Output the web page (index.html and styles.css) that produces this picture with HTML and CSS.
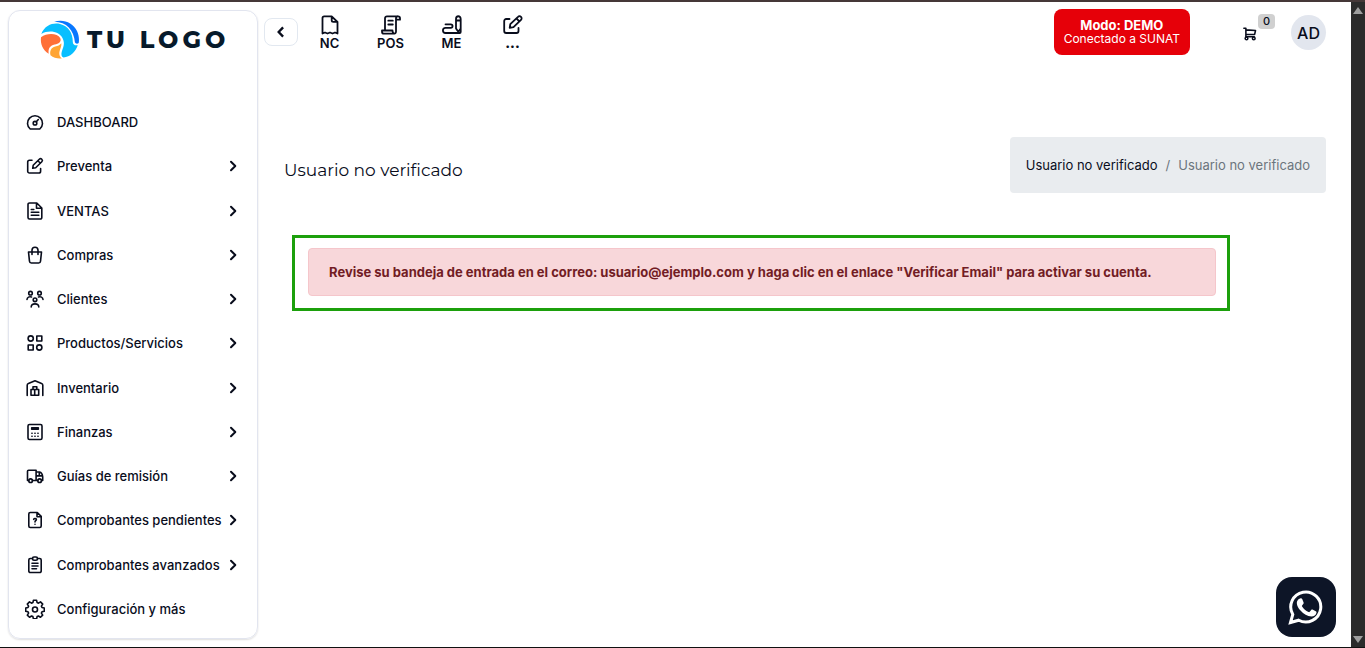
FILE: index.html
```html
<!DOCTYPE html>
<html lang="es">
<head>
<meta charset="utf-8">
<title>Usuario no verificado</title>
<link rel="stylesheet" href="styles.css">
</head>
<body>
<svg class="sprite" aria-hidden="true">
  <symbol id="chevron" viewBox="0 0 12 12"><path d="M4 1.700 8.300 6 4 10.300"/></symbol>
  <symbol id="edit" viewBox="0 0 20 20"><path d="M7 4.200H4.500A1.800 1.800 0 0 0 2.700 6v9.200A1.800 1.800 0 0 0 4.500 17h9.300a1.800 1.800 0 0 0 1.800-1.800v-2.700M7.700 12.300l.5-3L14.300 3.200a1.700 1.700 0 0 1 2.500 2.500l-6.100 6.100-3 .5ZM12.900 4.700l2.500 2.500"/></symbol>
  <symbol id="edit-large" viewBox="0 0 20 20"><path d="M6.500 4H3.200A2 2 0 0 0 1.200 6v10a2 2 0 0 0 2 2h10.300a2 2 0 0 0 2-2v-3M6.700 12.800l.6-3.700L15 1.800a2.100 2.100 0 0 1 3 3l-7.500 7.400-3.800.6ZM13.500 3.500l2.800 2.800"/></symbol>
</svg>
<div class="app">
  <aside class="sidebar">
    <a class="logo" href="#">
      <svg class="logo-mark" viewBox="0 0 40 40" aria-hidden="true">
        <path fill="#0877ff" d="M14 1.800C23-1.500 33 2.500 37 11c2 4.500 2.300 8.500 1.700 12-1.300 1.200-3.200.8-3.800-.7C34 10 26 1.500 14 1.800Z"/>
        <path fill="#08bfff" d="M1.300 14C5 5 13 2.500 20 4c8 1.700 13 9 12.800 18 0 2.800 2.500 3.800 5 3.200-2.500 7-7.500 11.500-14.300 12.300-2-.8-2.500-3-1.800-5.500 1.500-5 3.500-8 1-13.500C19.500 11.500 9 9.500 1.300 14Z"/>
        <path fill="#ff7038" d="M1 17.200c6-4.700 16.500-4.200 19.200.8 1.800 4-1.700 5.700-5.500 6.500-5.200 1.200-6.700 4.300-6 9.300C2.500 30 .2 23.500 1 17.200Z"/>
        <path fill="#ffa534" d="M10.500 35.300c-1-4.300.5-7.800 4.800-8.800 2.700-.6 4.400-1.400 6-3.300.5 4-2 6.500-2 10.300 0 2 1 3.800 2.500 5-4 .5-8.300-.5-11.300-3.200Z"/>
      </svg>
      <span class="logo-text">TU LOGO</span>
    </a>
    <nav class="menu">
      <a href="#"><svg class="icon" viewBox="0 0 20 20"><path d="M5.200 17a7.500 7.500 0 1 1 9.600 0Z"/><circle cx="10" cy="11.200" r="1.800"/><path d="m11.300 9.800 2-2.300"/></svg><span>DASHBOARD</span></a>
      <a href="#"><svg class="icon"><use href="#edit"/></svg><span>Preventa</span><svg class="arrow"><use href="#chevron"/></svg></a>
      <a href="#"><svg class="icon" viewBox="0 0 20 20"><path d="M4.500 2h7.300l5 5v9.500A1.500 1.500 0 0 1 15.300 18H4.500A1.500 1.500 0 0 1 3 16.500v-13A1.500 1.500 0 0 1 4.500 2ZM11.500 2v5.200h5.200M6.300 8.500h2.500M6.300 11.300h7.500M6.300 14.300h7.500"/></svg><span>VENTAS</span><svg class="arrow"><use href="#chevron"/></svg></a>
      <a href="#"><svg class="icon" viewBox="0 0 20 20"><path d="M3.500 7h13l-1 9.300A1.800 1.800 0 0 1 13.700 18H6.300a1.800 1.800 0 0 1-1.800-1.700ZM7 9.500V5.300a3 3 0 0 1 6 0v4.200"/></svg><span>Compras</span><svg class="arrow"><use href="#chevron"/></svg></a>
      <a href="#"><svg class="icon" viewBox="0 0 20 20"><circle cx="5.500" cy="4.200" r="1.800"/><circle cx="14.500" cy="4.200" r="1.800"/><circle cx="10" cy="10.800" r="1.800"/><path d="M2 10.500c.2-2.500 2.200-3 4.500-2.500M18 10.500c-.2-2.500-2.200-3-4.500-2.500M6.200 18c.2-4.200 7.400-4.200 7.600 0"/></svg><span>Clientes</span><svg class="arrow"><use href="#chevron"/></svg></a>
      <a href="#"><svg class="icon" viewBox="0 0 20 20"><circle cx="5.700" cy="5.500" r="2.600"/><path d="M11.800 3h5v5h-5ZM3.200 12h5v5h-5Z"/><circle cx="14.300" cy="14.500" r="2.600"/></svg><span>Productos/Servicios</span><svg class="arrow"><use href="#chevron"/></svg></a>
      <a href="#"><svg class="icon" viewBox="0 0 20 20"><path d="M2.200 17.500V7.200c0-.8.4-1.400 1.200-1.700L10 2.700l6.600 2.800c.8.300 1.200.9 1.200 1.700v10.300M6 17.300v-5.800h3.700v5.800ZM9.700 11.500h4v5.800h-4M8 11.300V8.800h3.800v2.500"/></svg><span>Inventario</span><svg class="arrow"><use href="#chevron"/></svg></a>
      <a href="#"><svg class="icon" viewBox="0 0 20 20"><rect x="3" y="2.500" width="14" height="15" rx="1.500"/><path d="M6.700 5.800h6.600v1.500H6.700Z"/><path stroke-dasharray=".2 2.800" d="M6.900 11.200h6.500M6.900 14.200h6.500"/></svg><span>Finanzas</span><svg class="arrow"><use href="#chevron"/></svg></a>
      <a href="#"><svg class="icon" viewBox="0 0 20 20"><path d="M3.700 14.500H2.500V5.300c0-.7.500-1.100 1.100-1.100h7.500v10.300H7.500M11.100 6h3.400c1.800.4 3 3 3.200 4.800v3.700h-1M11.100 9.900h6.300M14.300 6v3.900M11.100 14.500h1.700"/><circle cx="5.600" cy="14.700" r="1.800"/><circle cx="14.600" cy="14.700" r="1.800"/></svg><span>Guías de remisión</span><svg class="arrow"><use href="#chevron"/></svg></a>
      <a href="#"><svg class="icon" viewBox="0 0 20 20"><path d="M5.300 2.500h7L16.200 6.400V16a1.500 1.500 0 0 1-1.500 1.500H5.300A1.500 1.500 0 0 1 3.800 16V4a1.500 1.500 0 0 1 1.500-1.500ZM12 2.500v4.200h4.200M8.700 9.300c.5-1.200 2.800-1 2.700.4-.1 1-1.400 1.100-1.400 2.200M10 14.200v.1"/></svg><span>Comprobantes pendientes</span><svg class="arrow"><use href="#chevron"/></svg></a>
      <a href="#"><svg class="icon" viewBox="0 0 20 20"><path d="M7.500 3.500H5.300A1.500 1.500 0 0 0 3.800 5v11a1.500 1.500 0 0 0 1.500 1.500h9.400a1.500 1.500 0 0 0 1.500-1.500V5a1.500 1.500 0 0 0-1.500-1.500h-2.200M7 8.300h6M7 11h6M7 13.700h4.500"/><rect x="7.500" y="2" width="5" height="3.200" rx="1.500"/></svg><span>Comprobantes avanzados</span><svg class="arrow"><use href="#chevron"/></svg></a>
      <a href="#"><svg class="icon" viewBox="0 0 20 20"><path d="M8.400 1.300h3.200l.5 2.300 1.400.6 2-1.300 2.200 2.200-1.300 2 .6 1.400 2.300.5v3.200l-2.300.5-.6 1.400 1.300 2-2.200 2.200-2-1.300-1.400.6-.5 2.300H8.400l-.5-2.300-1.400-.6-2 1.300-2.200-2.200 1.300-2-.6-1.400-2.300-.5V9l2.300-.5.6-1.400-1.300-2 2.200-2.200 2 1.300 1.400-.6Z"/><circle cx="10" cy="10.500" r="2.500"/></svg><span>Configuración y más</span></a>
    </nav>
  </aside>

  <main class="main">
    <header class="topbar">
      <button class="collapse" type="button" aria-label="Contraer menú"><svg viewBox="0 0 12 12"><path d="M7.800 2 4 6l3.800 4"/></svg></button>
      <nav class="shortcuts">
        <a href="#"><svg class="icon" viewBox="0 0 20 20"><path d="M2.500 18.500V3A1.700 1.700 0 0 1 4.200 1.300h7.500L17.500 7v11.500l-2.500-1-2.500 1-2.500-1-2.500 1-2.500-1ZM11.700 1.500v3.800c0 1 .6 1.600 1.600 1.600h4"/></svg><span>NC</span></a>
        <a href="#"><svg class="icon" viewBox="0 0 20 20"><path d="M4 15.500V3.300c0-1.300.8-2 2-2h10.800M15 16.500V3.300c0-2.600 4-2.600 4 0v1.400h-4M3 15.500h8.500c0 3.800 3.500 4 3.500 1M3 15.500H1v1.200c0 1.200.8 2 2 2h10M7.300 5.700h4.500M7.300 9.500h4.500"/></svg><span>POS</span></a>
        <a href="#"><svg class="icon" viewBox="0 0 20 20"><path d="M3.500 9.300h5.300a1.700 1.700 0 0 1 0 3.500H3.500c-3.500 0-3.300 5.200 0 5.200h14.200a1 1 0 0 0 1-1V4c0-3.700-4.700-3.700-4.700 0v9.500l2.300 3.200 2.400-3.200M14 5.500h4.600"/></svg><span>ME</span></a>
        <a href="#"><svg class="icon"><use href="#edit-large"/></svg><span class="more">...</span></a>
      </nav>
      <div class="account">
        <button class="mode" type="button"><strong>Modo: DEMO</strong><span>Conectado a SUNAT</span></button>
        <a class="cart" href="#" aria-label="Carrito"><svg viewBox="0 0 16 16"><path d="M1 1.500h2.300v9.700h9.500M3.300 3.300l11 .7-1 4.500h-10"/><circle cx="4" cy="13" r="1.500"/><circle cx="12.300" cy="13" r="1.500"/></svg><span class="badge">0</span></a>
        <button class="avatar" type="button">AD</button>
      </div>
    </header>
    <section class="heading">
      <h1>Usuario no verificado</h1>
      <nav class="breadcrumb"><a href="#">Usuario no verificado</a><span>/</span><span>Usuario no verificado</span></nav>
    </section>
    <section class="notice">
      <p class="alert" role="alert">Revise su bandeja de entrada en el correo: usuario@ejemplo.com y haga clic en el enlace "Verificar Email" para activar su cuenta.</p>
    </section>
  </main>
  <div class="scrollbar" aria-hidden="true"><i class="up"></i><i class="down"></i></div>
</div>
<a class="whatsapp" href="#" aria-label="WhatsApp"><svg viewBox="0 0 36 36"><path class="bubble" d="M2.500 33.500 4.800 25.500A15 15 0 1 1 10.700 31.200Z"/><path class="phone" d="M12.200 9.500c.8-.3 1.700-.2 2.100.8l1.300 3.100c.2.500.1 1-.2 1.400l-1.300 1.600c-.3.400-.3.700 0 1.100 1.600 2.600 3.600 4.300 6.400 5.500.5.200.9.200 1.200-.2l1.500-1.800c.4-.5.800-.6 1.300-.4l3.200 1.600c.7.300.9.700.8 1.400-.3 2.700-2.600 4-5 4-4.200-.2-7.800-2.400-11-6-2-2.300-3.700-4.800-3.700-7.700 0-2 1.300-3.900 3.400-4.400Z"/></svg></a>
</body>
</html>
```
FILE: styles.css
```css
* { box-sizing: border-box; }
body {
  margin: 0;
  background: #fff;
  color: #090d1c;
  font: 500 13px/20px Inter, "Liberation Sans", sans-serif;
}
a { color: inherit; text-decoration: none; }
button { margin: 0; padding: 0; border: 0; font: inherit; color: inherit; cursor: pointer; }
svg { fill: none; stroke: currentColor; stroke-width: 1.6px; stroke-linecap: round; stroke-linejoin: round; flex: none; }
.sprite { position: absolute; width: 0; height: 0; }
.app {
  display: flex;
  min-height: 100vh;
  border-top: 2px solid #453838;
  border-bottom: 1px solid #111;
}
.sidebar {
  display: flex;
  flex-direction: column;
  width: 250px;
  margin: 8px 0 8px 8px;
  padding-bottom: 7px;
  border: 1px solid #e2e5ef;
  border-radius: 12px;
  box-shadow: 0 1px 2px #0002;
}
.logo { display: flex; align-items: center; gap: 7px; padding: 9px 0 40px 31px; }
.logo-mark { width: 40px; height: 40px; stroke: none; }
.logo-text { font: 800 24px/38px Montserrat, Lato, sans-serif; letter-spacing: 4px; color: #071a2b; white-space: nowrap; }
.menu { flex: 1; display: flex; flex-direction: column; }
.menu a { flex: 1; display: flex; align-items: center; padding: 0 18px 0 16px; }
.icon { width: 20px; height: 20px; }
.menu span { flex: 1; margin-left: 12px; white-space: nowrap; }
.arrow { width: 12px; height: 12px; stroke-width: 2px; }
.main { flex: 1; min-width: 0; }
.topbar { display: flex; align-items: flex-start; padding: 7px 25px 0 6px; }
.collapse {
  display: flex;
  align-items: center;
  justify-content: center;
  width: 34px;
  height: 28px;
  margin-top: 9px;
  border: 1px solid #e2e8f0;
  border-radius: 8px;
  background: #fff;
}
.collapse svg { width: 14px; height: 14px; stroke-width: 2px; stroke-linecap: butt; stroke-linejoin: miter; }
.shortcuts { display: flex; margin-left: 1px; padding-top: 6px; }
.shortcuts a { display: flex; flex-direction: column; align-items: center; width: 61px; line-height: 16px; }
.shortcuts .icon { stroke-width: 1.8px; }
.shortcuts span { font-weight: 600; }
.shortcuts .more { font-weight: 900; }
.account { display: flex; align-items: flex-start; margin-left: auto; }
.mode {
  display: flex;
  flex-direction: column;
  align-items: center;
  justify-content: center;
  padding: 10px;
  border-radius: 8px;
  background: #e60009;
  color: #fff;
  font-size: 12px;
  line-height: 13px;
  font-weight: 400;
}
.mode strong { font-size: 13px; font-weight: 700; }
.cart { position: relative; width: 32px; height: 36px; margin: 6px 16px 0 53px; }
.cart svg { width: 14px; height: 14px; margin-top: 12px; stroke-width: 1.8px; }
.badge {
  position: absolute;
  top: -1px;
  right: 0;
  width: 17px;
  border-radius: 4px;
  background: #d0d0d0;
  font-size: 11px;
  line-height: 15px;
  text-align: center;
}
.avatar { width: 35px; height: 35px; margin-top: 6px; border-radius: 50%; background: #e2e6ee; font-size: 16px; }
.heading { display: flex; align-items: center; justify-content: space-between; margin: 82px 25px 0 26px; }
.heading h1 { margin: 10px 0 0; font: 400 17px/28px Montserrat, Inter, sans-serif; }
.breadcrumb {
  display: flex;
  gap: 8px;
  padding: 18px 16px;
  border-radius: 4px;
  background: #e9ecef;
  color: #6c757d;
  font-weight: 400;
}
.breadcrumb a { color: #090d1c; }
.notice { margin: 42px 121px 0 34px; padding: 10px 11px 12px 13px; border: 3px solid #1ca00c; }
.alert {
  margin: 0;
  padding: 13px 20px;
  border: 1px solid #f5c6cb;
  border-radius: 4px;
  background: #f8d7da;
  color: #721c24;
  font-weight: 700;
}
.scrollbar { display: flex; flex-direction: column; justify-content: space-between; align-items: center; width: 14px; padding: 5px 0 4px; background: #2b2b2b; }
.scrollbar i { border: 5px solid transparent; }
.scrollbar .up { border-top: 0; border-bottom: 7px solid #9f9f9f; }
.scrollbar .down { border-bottom: 0; border-top: 7px solid #9f9f9f; }
.whatsapp {
  position: fixed;
  right: 29px;
  bottom: 11px;
  display: flex;
  align-items: center;
  justify-content: center;
  width: 60px;
  height: 60px;
  border-radius: 16px;
  background: #0d1527;
  color: #fff;
}
.whatsapp svg { width: 36px; height: 36px; }
.bubble { stroke-width: 3px; stroke-linejoin: miter; }
.phone { fill: #fff; stroke: none; }
```
